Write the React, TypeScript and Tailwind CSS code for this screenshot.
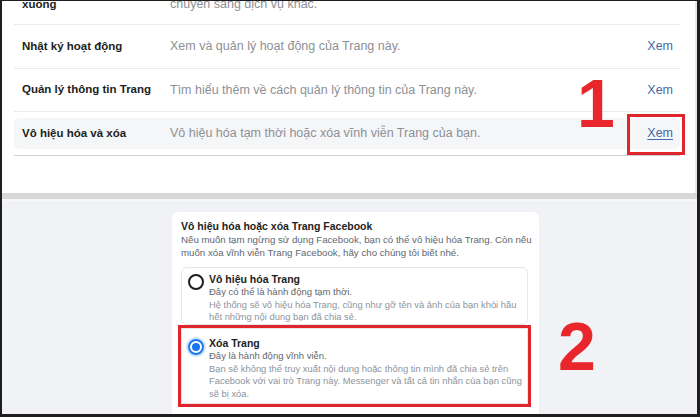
import React from 'react'

const font = { fontFamily: '"Liberation Sans", Arial, sans-serif' }

interface RowProps {
  label: string
  desc: string
  link?: boolean
  underline?: boolean
}

function Row({ label, desc, link = true, underline = false }: RowProps) {
  return (
    <div className="flex items-center w-full h-full">
      <div className="w-[156px] pl-[8px] text-[11.5px] font-bold text-[#1c1e21] whitespace-nowrap">
        {label}
      </div>
      <div className="flex-1 text-[12.5px] text-[#8d9096] whitespace-nowrap">
        {desc}
      </div>
      {link && (
        <div
          className={`pr-[7px] text-[12.5px] text-[#4469a8] ${
            underline ? 'underline underline-offset-2' : ''
          }`}
        >
          Xem
        </div>
      )}
    </div>
  )
}

function Radio({ checked }: { checked?: boolean }) {
  if (checked) {
    return (
      <div className="w-[16px] h-[16px] shrink-0 rounded-full border-2 border-[#1877f2] ring-2 ring-[#cfe2fb] flex items-center justify-center">
        <div className="w-[8px] h-[8px] rounded-full bg-[#1877f2]" />
      </div>
    )
  }
  return (
    <div className="w-[16px] h-[16px] shrink-0 rounded-full border-2 border-[#1c1e21]" />
  )
}

export default function App() {
  return (
    <div
      className="w-[700px] h-[417px] bg-[#1e1e1e] pl-[2px] pt-[1px] pr-[3px] pb-[3px] flex flex-col overflow-hidden"
      style={font}
    >
      {/* top: settings list */}
      <div className="relative h-[192px] shrink-0 bg-white overflow-hidden border-r-2 border-[#e6e6e6]">
        <div className="ml-[12px] w-[666px] flex flex-col">
          <div className="h-[24px] border-b border-[#ebebeb] flex items-start">
            <div className="-mt-[4px] w-full leading-[15px]">
              <Row label="xuống" desc="chuyển sang dịch vụ khác." link={false} />
            </div>
          </div>
          <div className="h-[44px] border-b border-[#ebebeb]">
            <Row
              label="Nhật ký hoạt động"
              desc="Xem và quản lý hoạt động của Trang này."
            />
          </div>
          <div className="h-[43px] border-b border-[#ebebeb]">
            <Row
              label="Quản lý thông tin Trang"
              desc="Tìm hiểu thêm về cách quản lý thông tin của Trang này."
            />
          </div>
          <div className="h-[44px] py-[6px] border-b border-[#cfcfcf]">
            <div className="h-full bg-[#f5f6f7] rounded-[6px]">
              <Row
                label="Vô hiệu hóa và xóa"
                desc="Vô hiệu hóa tạm thời hoặc xóa vĩnh viễn Trang của bạn."
                underline
              />
            </div>
          </div>
        </div>

        {/* annotation 1 */}
        <span className="absolute left-[575px] top-[68px] text-[68px] leading-none font-bold text-[#e8262c]">
          1
        </span>
        <div className="absolute left-[625px] top-[113px] w-[58px] h-[41px] border-[3px] border-[#e0262c]" />
      </div>

      <div className="h-[6px] shrink-0 bg-[#d8d8d8]" />
      <div className="h-[2px] shrink-0 bg-[#f7f7f7]" />

      {/* bottom: delete page dialog */}
      <div className="relative flex-1 bg-[#f0f2f5] flex items-stretch">
        <div className="mt-[11px] ml-[170px] w-[367px] bg-white rounded-t-[6px] pt-[7px] px-[9px] flex flex-col">
          <div className="text-[10.5px] leading-[14px] font-bold text-[#1c1e21] whitespace-nowrap">
            Vô hiệu hóa hoặc xóa Trang Facebook
          </div>
          <div className="text-[9.7px] leading-[13px] text-[#606770] whitespace-nowrap">
            <div>Nếu muốn tạm ngừng sử dụng Facebook, bạn có thể vô hiệu hóa Trang. Còn nếu</div>
            <div>muốn xóa vĩnh viễn Trang Facebook, hãy cho chúng tôi biết nhé.</div>
          </div>

          <div className="mt-[8px] w-[347px] h-[58px] border border-[#e4e6eb] rounded-[6px] pl-[6px] pt-[6px] flex gap-[5px]">
            <Radio />
            <div className="-mt-[1px] whitespace-nowrap">
              <div className="text-[10.5px] leading-[13px] font-bold text-[#1c1e21]">
                Vô hiệu hóa Trang
              </div>
              <div className="text-[9.5px] leading-[12.5px] text-[#65676b]">
                Đây có thể là hành động tạm thời.
              </div>
              <div className="text-[9.4px] leading-[12.5px] text-[#8d949e]">
                <div>Hệ thống sẽ vô hiệu hóa Trang, cũng như gỡ tên và ảnh của bạn khỏi hầu</div>
                <div>hết những nội dung bạn đã chia sẻ.</div>
              </div>
            </div>
          </div>

          <div className="mt-[3px] w-[347px] h-[76px] border border-[#e4e6eb] outline-3 outline-solid outline-[#e0262c] pl-[6px] pt-[8px] flex gap-[5px]">
            <div className="mt-[2px]">
              <Radio checked />
            </div>
            <div className="whitespace-nowrap">
              <div className="text-[10.5px] leading-[13px] font-bold text-[#1c1e21]">
                Xóa Trang
              </div>
              <div className="text-[9.5px] leading-[12.5px] text-[#65676b]">
                Đây là hành động vĩnh viễn.
              </div>
              <div className="text-[9.4px] leading-[12.5px] text-[#8d949e]">
                <div>Bạn sẽ không thể truy xuất nội dung hoặc thông tin mình đã chia sẻ trên</div>
                <div>Facebook với vai trò Trang này. Messenger và tất cả tin nhắn của bạn cũng</div>
                <div>sẽ bị xóa.</div>
              </div>
            </div>
          </div>
        </div>

        {/* annotation 2 */}
        <span className="absolute left-[556px] top-[111px] text-[68px] leading-none font-bold text-[#e8262c]">
          2
        </span>
      </div>
    </div>
  )
}
